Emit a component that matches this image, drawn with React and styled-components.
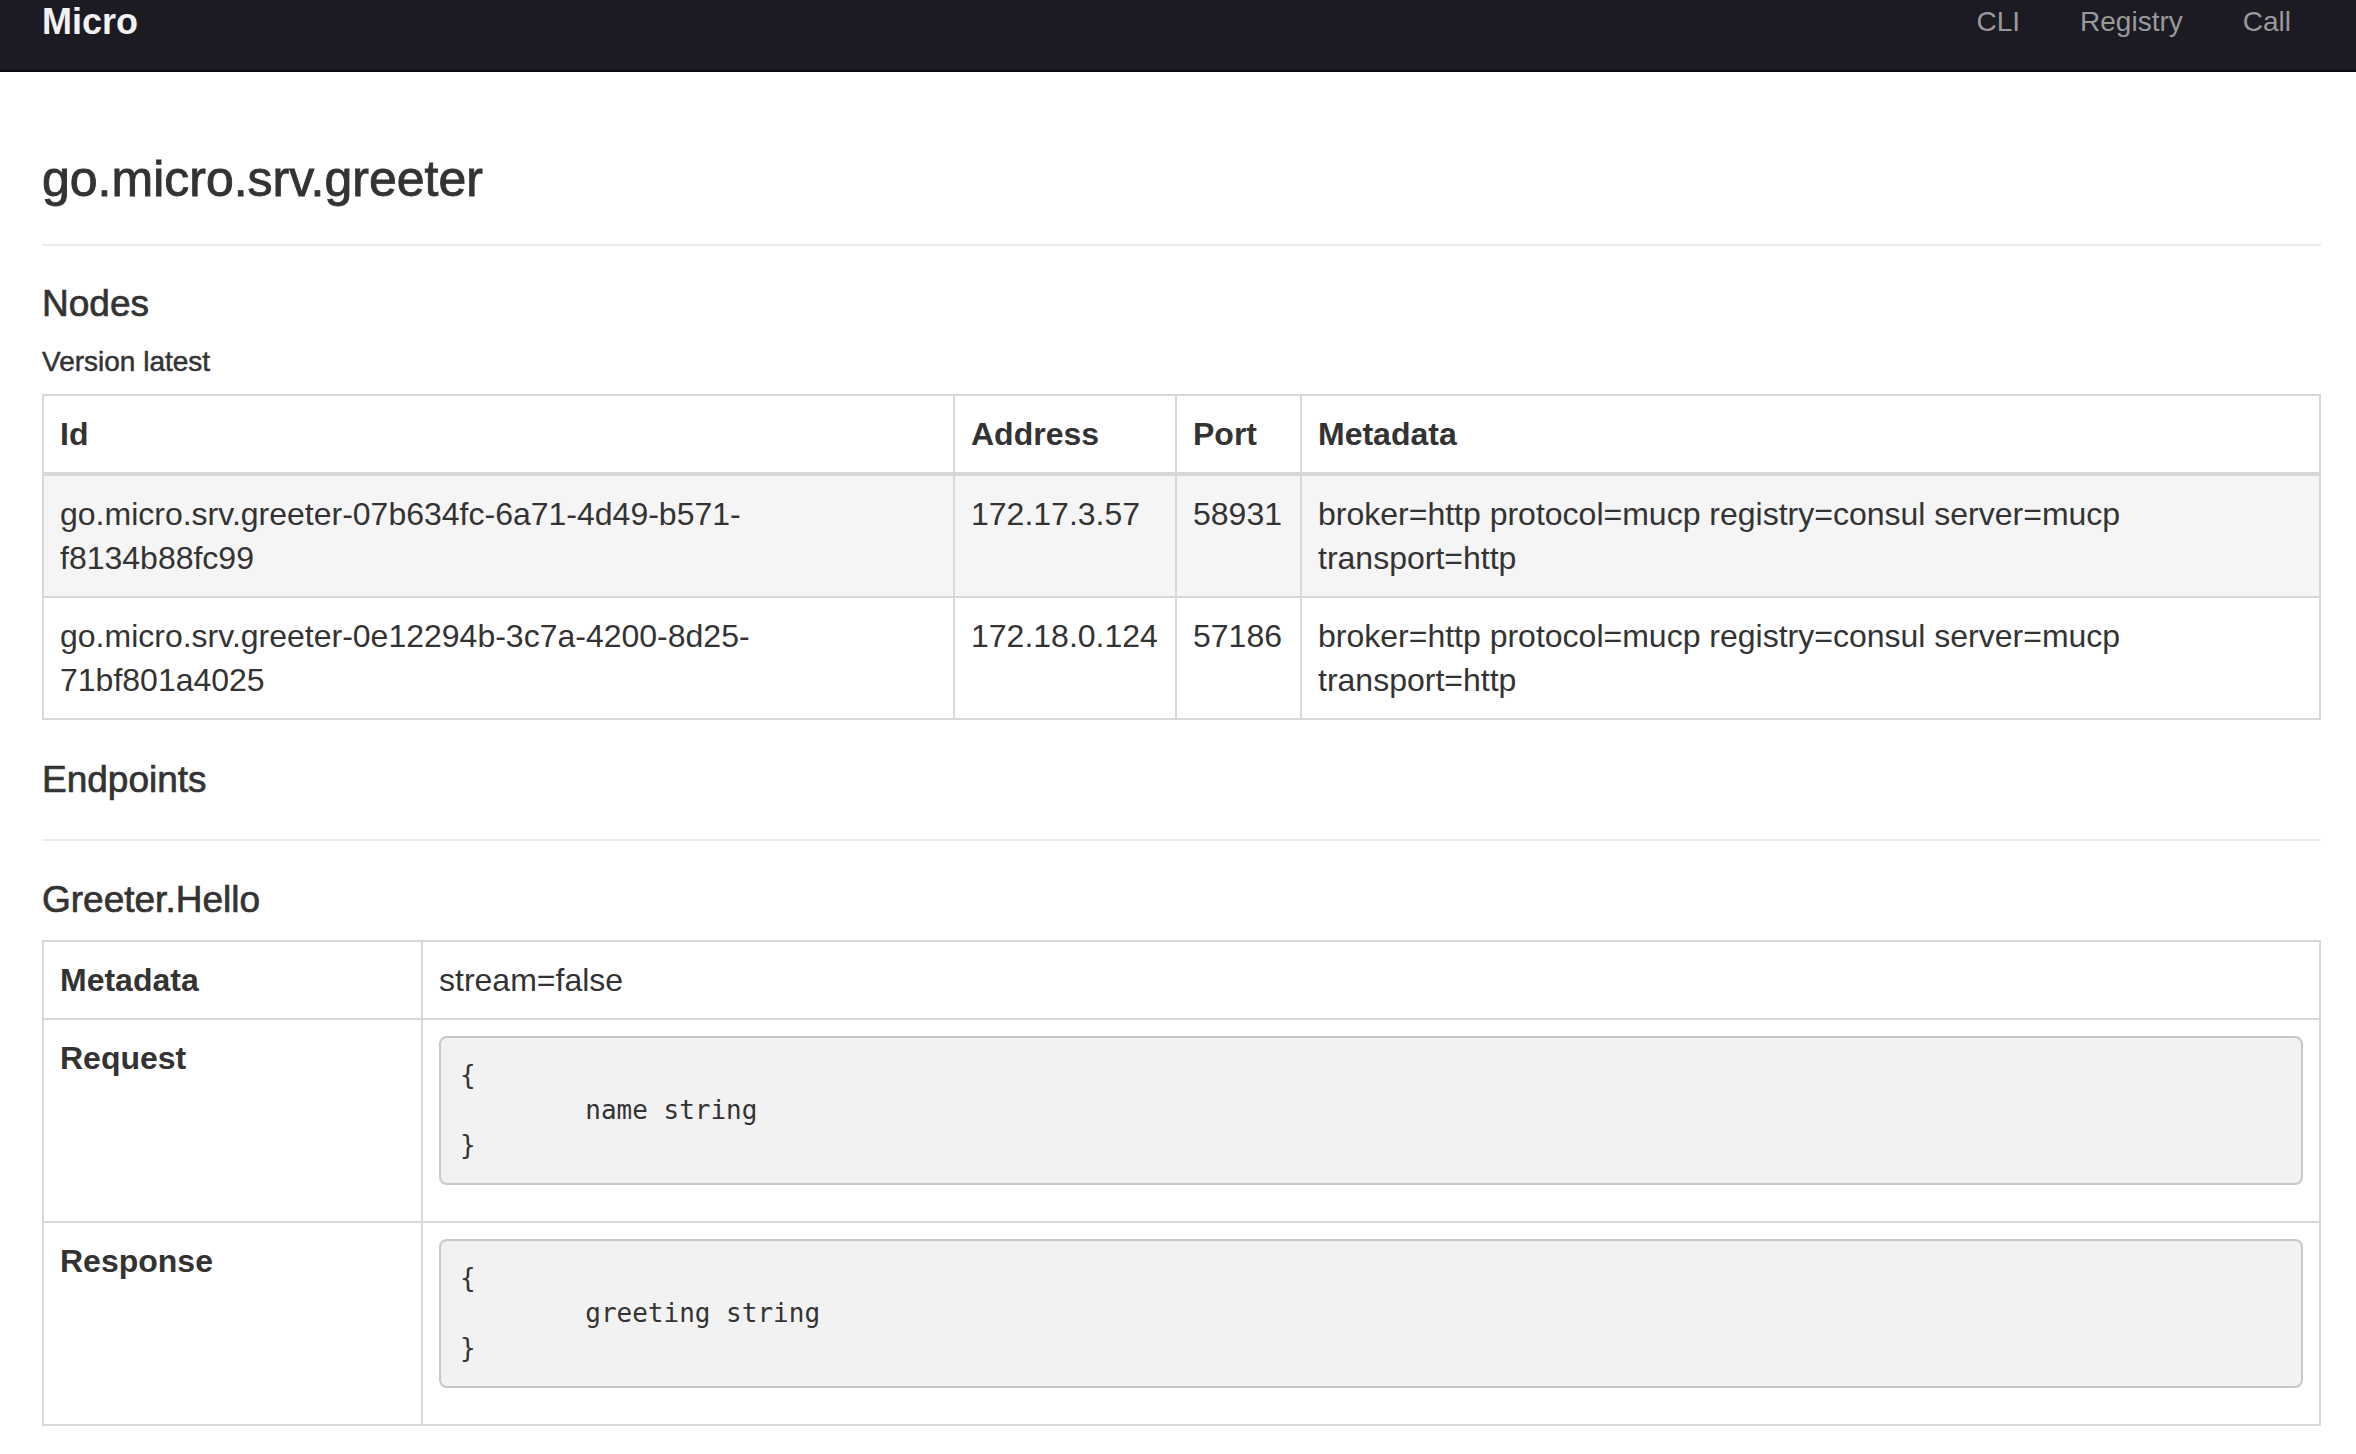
import React from "react";
import styled, { createGlobalStyle } from "styled-components";

const GlobalStyle = createGlobalStyle`
	body {
		margin: 0;
		background: #ffffff;
		color: #333333;
		font-family: "Liberation Sans", Arial, sans-serif;
	}
`

const Navbar = styled.nav`
	display: flex;
	justify-content: space-between;
	align-items: flex-start;
	height: 70px;
	padding: 0 35px 0 42px;
	background-color: #1c1b24;
	border-bottom: 2px solid #0b0b0f;
`

const Brand = styled.a`
	padding-top: 2px;
	font-size: 36px;
	line-height: 40px;
	font-weight: 700;
	color: #f2f2f2;
	text-decoration: none;
`

const NavLinks = styled.ul`
	display: flex;
	margin: 0;
	padding: 0;
	list-style: none;
`

const NavLink = styled.a`
	display: block;
	padding: 2px 30px 0;
	font-size: 28px;
	line-height: 40px;
	color: #999999;
	text-decoration: none;
`

const Main = styled.main`
	padding: 0 35px 40px 42px;
`

const PageHeader = styled.div`
	margin-top: 80px;
	padding-bottom: 37px;
	border-bottom: 2px solid #eaeaea;
`

const Title = styled.h1`
	margin: 0;
	font-size: 50px;
	line-height: 55px;
	font-weight: 400;
	-webkit-text-stroke: 0.9px #333333;
`

const SectionTitle = styled.h4`
	margin: ${p => p.$top}px 0 0;
	font-size: 37px;
	line-height: 40px;
	font-weight: 400;
	-webkit-text-stroke: 0.7px #333333;
`

const EndpointsHeader = styled.div`
	margin-top: 40px;
	padding-bottom: 39px;
	border-bottom: 2px solid #eaeaea;
`

const Version = styled.h5`
	margin: 22px 0 0;
	font-size: 28px;
	line-height: 31px;
	font-weight: 400;
	-webkit-text-stroke: 0.5px #333333;
`

const Table = styled.table`
	width: 100%;
	margin-top: ${p => p.$top}px;
	border-collapse: collapse;
	table-layout: fixed;
	border: 2px solid #d8d8d8;
	font-size: 32px;
	line-height: 44px;
`

const Col = styled.col`
	width: ${p => p.$w}px;
`

const HeadCell = styled.th`
	padding: 16px;
	text-align: left;
	vertical-align: ${p => (p.$head ? "bottom" : "top")};
	font-weight: 700;
	border: 2px solid #d8d8d8;
	border-bottom-width: ${p => (p.$head ? 4 : 2)}px;
`

const Row = styled.tr`
	background-color: ${p => (p.$striped ? "#f5f5f5" : "#ffffff")};
`

const Cell = styled.td`
	padding: 16px;
	vertical-align: top;
	border: 2px solid #d8d8d8;
	white-space: ${p => (p.$nowrap ? "nowrap" : "normal")};
`

const Pre = styled.pre`
	margin: 0 0 20px;
	padding: 20px 19px;
	background-color: #f2f2f2;
	border: 2px solid #c8c8c8;
	border-radius: 8px;
	font-family: "DejaVu Sans Mono", "Liberation Mono", monospace;
	font-size: 26px;
	line-height: 35px;
	color: #333333;
	tab-size: 8;
`

const nodes = [
	{
		id: "go.micro.srv.greeter-07b634fc-6a71-4d49-b571-f8134b88fc99",
		address: "172.17.3.57",
		port: "58931",
		metadata: "broker=http protocol=mucp registry=consul server=mucp transport=http",
	},
	{
		id: "go.micro.srv.greeter-0e12294b-3c7a-4200-8d25-71bf801a4025",
		address: "172.18.0.124",
		port: "57186",
		metadata: "broker=http protocol=mucp registry=consul server=mucp transport=http",
	},
]

function NodeId({ id }) {
	const cut = id.lastIndexOf("-") + 1
	return <>{id.slice(0, cut)}<br />{id.slice(cut)}</>
}

export default function App() {
	return <div>
		<GlobalStyle />
		<Navbar>
			<Brand href="#">Micro</Brand>
			<NavLinks>
				<li><NavLink href="#">CLI</NavLink></li>
				<li><NavLink href="#">Registry</NavLink></li>
				<li><NavLink href="#">Call</NavLink></li>
			</NavLinks>
		</Navbar>
		<Main>
			<PageHeader>
				<Title>go.micro.srv.greeter</Title>
			</PageHeader>

			<SectionTitle $top={38}>Nodes</SectionTitle>
			<Version>Version latest</Version>
			<Table $top={17}>
				<colgroup>
					<Col $w={911} />
					<Col $w={222} />
					<Col $w={125} />
					<Col />
				</colgroup>
				<thead>
					<tr>
						<HeadCell $head>Id</HeadCell>
						<HeadCell $head>Address</HeadCell>
						<HeadCell $head>Port</HeadCell>
						<HeadCell $head>Metadata</HeadCell>
					</tr>
				</thead>
				<tbody>
					{nodes.map((n, i) => (
						<Row key={n.id} $striped={i % 2 === 0}>
							<Cell><NodeId id={n.id} /></Cell>
							<Cell $nowrap>{n.address}</Cell>
							<Cell $nowrap>{n.port}</Cell>
							<Cell>{n.metadata}</Cell>
						</Row>
					))}
				</tbody>
			</Table>

			<EndpointsHeader>
				<SectionTitle $top={0}>Endpoints</SectionTitle>
			</EndpointsHeader>

			<SectionTitle $top={39}>Greeter.Hello</SectionTitle>
			<Table $top={20}>
				<colgroup>
					<Col $w={379} />
					<Col />
				</colgroup>
				<tbody>
					<tr>
						<HeadCell>Metadata</HeadCell>
						<Cell>stream=false</Cell>
					</tr>
					<tr>
						<HeadCell>Request</HeadCell>
						<Cell><Pre>{"{\n\tname string\n}"}</Pre></Cell>
					</tr>
					<tr>
						<HeadCell>Response</HeadCell>
						<Cell><Pre>{"{\n\tgreeting string\n}"}</Pre></Cell>
					</tr>
				</tbody>
			</Table>
		</Main>
	</div>
}
